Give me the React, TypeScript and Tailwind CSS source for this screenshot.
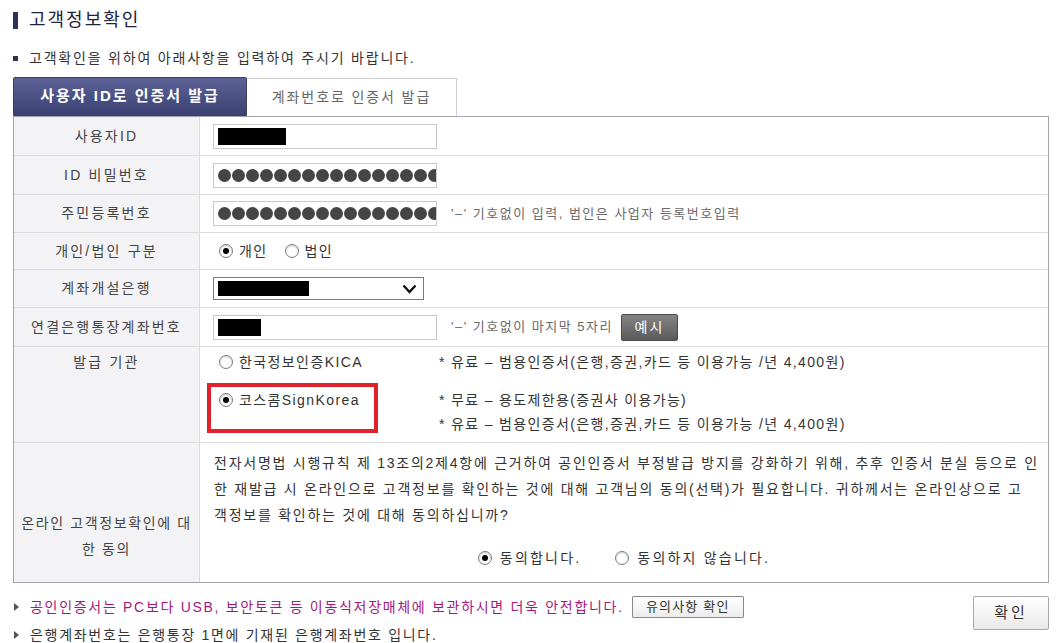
import { FC, ReactNode } from "react";

const Radio: FC<{ checked?: boolean }> = ({ checked }) => (
  <span className="inline-flex w-[14px] h-[14px] shrink-0 rounded-full border border-[#7a7a7a] bg-white items-center justify-center shadow-[inset_0_1px_2px_rgba(0,0,0,0.2)]">
    {checked && <span className="w-[6px] h-[6px] rounded-full bg-black" />}
  </span>
);

const Option: FC<{ checked?: boolean; children: ReactNode; className?: string }> = ({
  checked,
  children,
  className,
}) => (
  <label className={`inline-flex items-center gap-[6px] ${className ?? ""}`}>
    <Radio checked={checked} />
    <span>{children}</span>
  </label>
);

const Row: FC<{ label: ReactNode; height: string; children: ReactNode }> = ({
  label,
  height,
  children,
}) => (
  <div className={`flex ${height} border-b border-[#dcdcdc]`}>
    <div className="w-[186px] shrink-0 bg-[#f3f3f5] border-r border-[#dcdcdc] flex items-center justify-center text-[#444] tracking-[2.2px]">
      {label}
    </div>
    <div className="flex-1 flex items-center pl-[13px]">{children}</div>
  </div>
);

const Dots: FC = () => (
  <div className="w-[224px] h-[25px] border border-[#c9c9c9] bg-white flex items-center gap-[1px] pl-[4px] overflow-hidden">
    {Array.from({ length: 17 }).map((_, i) => (
      <span key={i} className="w-[13px] h-[13px] shrink-0 rounded-full bg-[#454545]" />
    ))}
  </div>
);

const Hint: FC<{ children: ReactNode }> = ({ children }) => (
  <span className="ml-[14px] text-[13px] text-[#6a6a6a] tracking-[1.5px]">{children}</span>
);

const Arrow: FC = () => (
  <span className="w-0 h-0 border-y-[4px] border-y-transparent border-l-[5px] border-l-[#555] ml-[1px] mr-[11px]" />
);

export default function App() {
  return (
    <div className="w-[1063px] h-[643px] overflow-hidden bg-white font-['Liberation_Sans','Noto_Sans_CJK_KR',sans-serif] text-[14px] text-[#333] tracking-[1.4px]">
      <div className="ml-[13px] w-[1036px]">
        <div className="mt-[8px] h-[24px] flex items-center gap-[11px]">
          <span className="w-[5px] h-[17px] bg-[#2c3060]" />
          <h1 className="text-[18px] text-[#1e2240] tracking-[2px]">고객정보확인</h1>
        </div>

        <div className="mt-[18px] h-[16px] flex items-center gap-[11px]">
          <span className="w-[5px] h-[5px] bg-[#2c3060]" />
          <p className="tracking-[1.8px]">고객확인을 위하여 아래사항을 입력하여 주시기 바랍니다.</p>
        </div>

        <div className="mt-[11px] flex items-end h-[39px]">
          <div className="w-[234px] h-[39px] bg-linear-to-b from-[#5c6296] to-[#3c4172] border border-[#3a3e66] rounded-t-[2px] flex items-center justify-center text-white text-[15px] font-bold tracking-[2px]">
            사용자 ID로 인증서 발급
          </div>
          <div className="w-[210px] h-[38px] bg-white border-t border-r border-[#cfcfcf] flex items-center justify-center text-[#666] tracking-[1.9px]">
            계좌번호로 인증서 발급
          </div>
        </div>

        <div className="border border-[#a2a2b2]">
          <Row label="사용자ID" height="h-[39px]">
            <div className="w-[224px] h-[25px] border border-[#c9c9c9] bg-white flex items-center pl-[4px]">
              <span className="w-[68px] h-[17px] bg-black" />
            </div>
          </Row>
          <Row label="ID 비밀번호" height="h-[39px]">
            <Dots />
          </Row>
          <Row label="주민등록번호" height="h-[38px]">
            <Dots />
            <Hint>'–' 기호없이 입력, 법인은 사업자 등록번호입력</Hint>
          </Row>
          <Row label="개인/법인 구분" height="h-[37px]">
            <div className="flex items-center pl-[6px] gap-[17px]">
              <Option checked>개인</Option>
              <Option>법인</Option>
            </div>
          </Row>
          <Row label="계좌개설은행" height="h-[38px]">
            <div className="w-[211px] h-[23px] border border-[#7b7b7b] bg-white flex items-center justify-between pl-[4px] pr-[6px]">
              <span className="w-[91px] h-[15px] bg-black" />
              <svg width="15" height="10" viewBox="0 0 15 10">
                <polyline points="1.5,1.5 7.5,8 13.5,1.5" fill="none" stroke="#111" strokeWidth="2.4" />
              </svg>
            </div>
          </Row>
          <Row label="연결은행통장계좌번호" height="h-[39px]">
            <div className="w-[224px] h-[25px] border border-[#c9c9c9] bg-white flex items-center pl-[4px]">
              <span className="w-[43px] h-[17px] bg-black" />
            </div>
            <Hint>'–' 기호없이 마지막 5자리</Hint>
            <button className="ml-[8px] w-[57px] h-[27px] rounded-[2px] border border-[#4a4a4a] bg-linear-to-b from-[#858585] to-[#5a5a5a] text-white text-[14px] tracking-[2px]">
              예시
            </button>
          </Row>

          <div className="flex h-[96px] border-b border-[#dcdcdc]">
            <div className="w-[186px] shrink-0 bg-[#f3f3f5] border-r border-[#dcdcdc] flex justify-center pt-[3px] text-[#444] tracking-[2.2px]">
              <span className="h-[24px] flex items-center">발급 기관</span>
            </div>
            <div className="w-[239px] shrink-0 flex flex-col">
              <div className="mt-[3px] h-[24px] flex items-center pl-[19px]">
                <Option>한국정보인증KICA</Option>
              </div>
              <div className="ml-[7px] mt-[9px] w-[171px] h-[50px] border-4 border-[#e1222b] pl-[8px] pt-[1px]">
                <div className="h-[24px] flex items-center">
                  <Option checked>코스콤SignKorea</Option>
                </div>
              </div>
            </div>
            <div className="flex-1 flex flex-col tracking-[1.35px]">
              <div className="mt-[3px] h-[24px] flex items-center">* 유료 – 범용인증서(은행,증권,카드 등 이용가능 /년 4,400원)</div>
              <div className="mt-[14px] h-[24px] flex items-center">* 무료 – 용도제한용(증권사 이용가능)</div>
              <div className="h-[24px] flex items-center">* 유료 – 범용인증서(은행,증권,카드 등 이용가능 /년 4,400원)</div>
            </div>
          </div>

          <div className="flex h-[139px]">
            <div className="w-[186px] shrink-0 bg-[#f3f3f5] border-r border-[#dcdcdc] pt-[67px] text-center leading-[26px] text-[#444] tracking-[1.6px]">
              온라인 고객정보확인에 대
              <br />한 동의
            </div>
            <div className="flex-1 flex flex-col pl-[14px] pt-[7px] overflow-hidden">
              <p className="leading-[26px] whitespace-nowrap tracking-[1.75px]">
                전자서명법 시행규칙 제 13조의2제4항에 근거하여 공인인증서 부정발급 방지를 강화하기 위해, 추후 인증서 분실 등으로 인
                <br />한 재발급 시 온라인으로 고객정보를 확인하는 것에 대해 고객님의 동의(선택)가 필요합니다. 귀하께서는 온라인상으로 고
                <br />객정보를 확인하는 것에 대해 동의하십니까?
              </p>
              <div className="mt-[18px] h-[24px] flex items-center justify-center gap-[34px] pr-[14px] tracking-[2.2px]">
                <label className="inline-flex items-center gap-[8px]">
                  <Radio checked />
                  <span>동의합니다.</span>
                </label>
                <label className="inline-flex items-center gap-[8px]">
                  <Radio />
                  <span>동의하지 않습니다.</span>
                </label>
              </div>
            </div>
          </div>
        </div>

        <div className="mt-[12px] flex justify-between">
          <div className="flex flex-col">
            <div className="h-[24px] flex items-center">
              <Arrow />
              <span className="text-[#a3177f] tracking-[1.7px]">공인인증서는 PC보다 USB, 보안토큰 등 이동식저장매체에 보관하시면 더욱 안전합니다.</span>
              <button className="ml-[8px] w-[112px] h-[22px] border border-[#8a8a8a] bg-linear-to-b from-white to-[#ececec] text-[13px] text-[#333] rounded-[1px] tracking-[1.2px]">
                유의사항 확인
              </button>
            </div>
            <div className="mt-[4px] h-[24px] flex items-center">
              <Arrow />
              <span className="tracking-[1.7px]">은행계좌번호는 은행통장 1면에 기재된 은행계좌번호 입니다.</span>
            </div>
          </div>
          <button className="mt-[1px] w-[76px] h-[34px] border border-[#a8a8a8] rounded-[2px] bg-linear-to-b from-white to-[#e9e9e9] text-[15px] text-[#333] tracking-[3px]">
            확인
          </button>
        </div>
      </div>
    </div>
  );
}
